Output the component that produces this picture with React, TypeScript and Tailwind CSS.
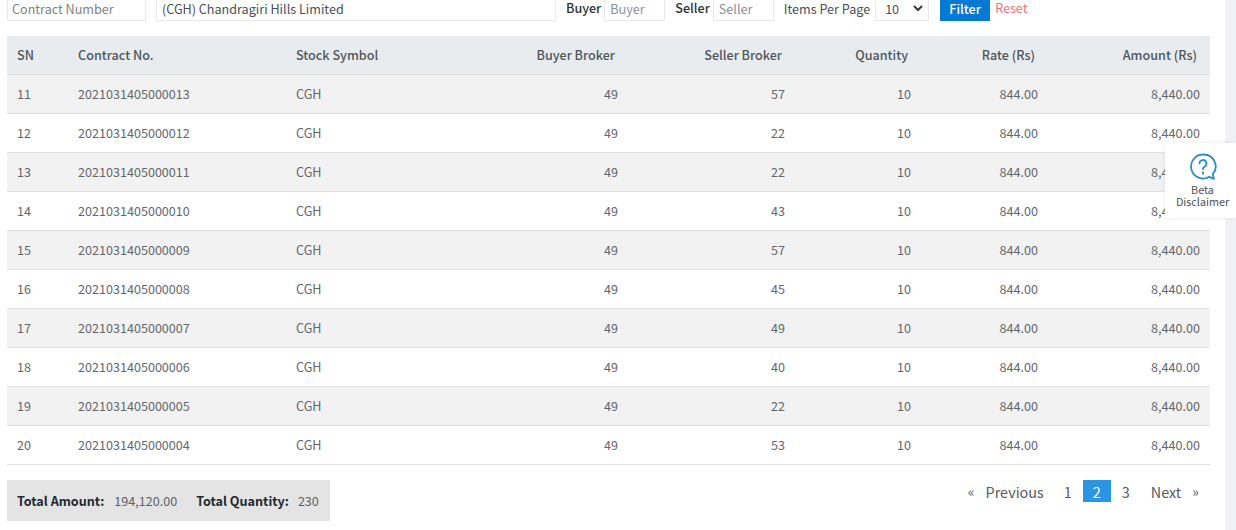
const FONT = "font-['Noto_Sans_CJK_SC','Noto_Sans',sans-serif]";

const rows = [
  { sn: 11, contract: "2021031405000013", seller: 57 },
  { sn: 12, contract: "2021031405000012", seller: 22 },
  { sn: 13, contract: "2021031405000011", seller: 22 },
  { sn: 14, contract: "2021031405000010", seller: 43 },
  { sn: 15, contract: "2021031405000009", seller: 57 },
  { sn: 16, contract: "2021031405000008", seller: 45 },
  { sn: 17, contract: "2021031405000007", seller: 49 },
  { sn: 18, contract: "2021031405000006", seller: 40 },
  { sn: 19, contract: "2021031405000005", seller: 22 },
  { sn: 20, contract: "2021031405000004", seller: 53 },
];

const inputCls =
  "h-[21px] border border-t-0 border-[#e6e8ea] bg-white px-[5px] pb-[4px] leading-[17px] flex items-center";

const Filters = () => (
  <div className="flex h-[21px] items-start text-[12.6px]">
    <div className={`${inputCls} w-[139px] !pl-[4px] text-[#7d8287]`}>Contract Number</div>
    <div className={`${inputCls} ml-[10px] w-[400px] text-[#4a4f55]`}>(CGH) Chandragiri Hills Limited</div>
    <span className="ml-[10px] font-medium leading-[16px] text-[#2f3439]">Buyer</span>
    <div className={`${inputCls} ml-[3px] w-[61px] text-[#8a8f94]`}>Buyer</div>
    <span className="ml-[10px] font-medium leading-[16px] text-[#2f3439]">Seller</span>
    <div className={`${inputCls} ml-[3px] w-[61px] text-[#8a8f94]`}>Seller</div>
    <span className="ml-[10px] leading-[17px] text-[#4a4f55]">Items Per Page</span>
    <div className={`${inputCls} ml-[5px] w-[54px] justify-between !pb-[3px] !pl-[9px] !pr-[5px] text-[#4a4f55]`}>
      <span>10</span>
      <svg width="10" height="7" viewBox="0 0 10 7" fill="none" stroke="#343a40" strokeWidth="2">
        <path d="M1 1l4 4 4-4" />
      </svg>
    </div>
    <div className="ml-[11px] flex h-[21px] w-[50px] items-center justify-center bg-[#0679d2] pb-[4px] font-medium leading-[17px] text-white">
      Filter
    </div>
    <span className="ml-[5px] leading-[16px] text-[#e9747c]">Reset</span>
  </div>
);

const Table = () => (
  <table className="mt-[15px] w-[1203px] table-fixed border-collapse text-[12.6px]">
    <colgroup>
      <col className="w-[61px]" />
      <col className="w-[218px]" />
      <col className="w-[164px]" />
      <col className="w-[178px]" />
      <col className="w-[167px]" />
      <col className="w-[126px]" />
      <col className="w-[127px]" />
      <col className="w-[162px]" />
    </colgroup>
    <thead>
      <tr className="h-[38px] border-b border-[#dee2e6] bg-[#e9ecef] text-[#50565c]">
        <th className="pl-[10px] pt-[2px] text-left font-medium">SN</th>
        <th className="pl-[10px] pt-[2px] text-left font-medium">Contract No.</th>
        <th className="pl-[10px] pt-[2px] text-left font-medium">Stock Symbol</th>
        <th className="pr-[13px] pt-[2px] text-right font-medium">Buyer Broker</th>
        <th className="pr-[13px] pt-[2px] text-right font-medium">Seller Broker</th>
        <th className="pr-[13px] pt-[2px] text-right font-medium">Quantity</th>
        <th className="pr-[13px] pt-[2px] text-right font-medium">Rate (Rs)</th>
        <th className="pr-[13px] pt-[2px] text-right font-medium">Amount (Rs)</th>
      </tr>
    </thead>
    <tbody>
      {rows.map((r, i) => (
        <tr key={r.sn} className={`h-[39px] border-b border-[#dee2e6] text-[#62676d] ${i % 2 === 0 ? "bg-[#f2f2f2]" : "bg-white"}`}>
          <td className="pl-[10px] pt-[2px]">{r.sn}</td>
          <td className="pl-[10px] pt-[2px]">{r.contract}</td>
          <td className="pl-[10px] pt-[2px]">CGH</td>
          <td className="pr-[10px] pt-[2px] text-right">49</td>
          <td className="pr-[10px] pt-[2px] text-right">{r.seller}</td>
          <td className="pr-[10px] pt-[2px] text-right">10</td>
          <td className="pr-[10px] pt-[2px] text-right">844.00</td>
          <td className="pr-[10px] pt-[2px] text-right">8,440.00</td>
        </tr>
      ))}
    </tbody>
  </table>
);

const Footer = () => (
  <div className="mt-[15px] flex w-[1203px] items-start justify-between">
    <div className="flex h-[41px] w-[323px] items-center whitespace-nowrap bg-[#e4e4e4] pl-[10px] pt-[2px] text-[12.6px] text-[#5d6268]">
      <span className="font-bold text-[#23282d]">Total Amount:</span>
      <span className="ml-[10px]">194,120.00</span>
      <span className="ml-[19px] font-bold text-[#23282d]">Total Quantity:</span>
      <span className="ml-[9px]">230</span>
    </div>
    <div className="mr-[11px] flex h-[22px] items-center whitespace-nowrap text-[14.4px] text-[#555b61]">
      <span className="pt-[2px] text-[14px]">«</span>
      <span className="ml-[11px] pt-[2px]">Previous</span>
      <span className="ml-[20px] pt-[2px]">1</span>
      <span className="ml-[11px] flex h-[22px] w-[28px] items-center justify-center bg-[#2a96e3] pt-[2px] text-white">2</span>
      <span className="ml-[11px] pt-[2px]">3</span>
      <span className="ml-[21px] pt-[2px]">Next</span>
      <span className="ml-[11px] pt-[2px] text-[14px]">»</span>
    </div>
  </div>
);

const Disclaimer = () => (
  <div className="absolute right-0 top-[143px] flex h-[75px] w-[71px] flex-col items-center bg-white pl-[4px] pt-[10px] text-[10.8px] leading-[12px] text-[#4d5358] shadow-[0_0_6px_rgba(0,0,0,0.08)]">
    <svg width="28" height="28" viewBox="0 0 28 28" fill="none" stroke="#2a8fc9" strokeWidth="1.8">
      <path d="M14 1.5a12 12 0 1 0 6.2 22.3l4.6 2-1-4.6A12 12 0 0 0 14 1.5z" strokeLinejoin="round" />
      <path d="M10.5 10.5a3.5 3.5 0 1 1 5.2 3.1c-1.1.6-1.7 1.3-1.7 2.6" strokeLinecap="round" />
      <path d="M14 19.2v1.6" strokeLinecap="round" />
    </svg>
    <span className="mt-[2px]">Beta</span>
    <span>Disclaimer</span>
  </div>
);

export default function App() {
  return (
    <div className={`${FONT} relative flex h-[530px] w-[1236px] overflow-hidden bg-white`}>
      <main className="w-[1225px] pl-[7px]">
        <Filters />
        <Table />
        <Footer />
      </main>
      <div className="h-full w-[11px] bg-[#f1f2f8]" />
      <Disclaimer />
    </div>
  );
}
